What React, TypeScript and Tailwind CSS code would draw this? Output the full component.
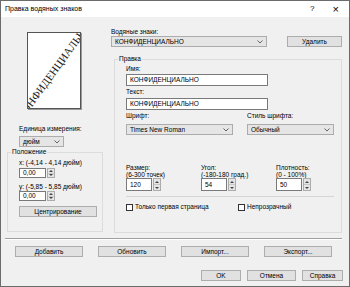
import React from 'react';

const ui = "font-['Liberation_Sans',Arial,sans-serif] text-[6.5px] text-black";

const Chevron: React.FC = () => (
  <svg width="6" height="4" viewBox="0 0 6 4" className="shrink-0">
    <path d="M0.5 0.5 L3 3 L5.5 0.5" fill="none" stroke="#444" strokeWidth="0.8" />
  </svg>
);

const Combo: React.FC<{ value: string; className?: string }> = ({ value, className = '' }) => (
  <div
    className={`flex items-center justify-between h-[11px] pl-[3px] pr-[3px] bg-[#e5e5e5] border border-[#acacac] leading-[9px] ${className}`}
  >
    <span>{value}</span>
    <Chevron />
  </div>
);

const Button: React.FC<{ label: string; className?: string }> = ({ label, className = '' }) => (
  <div
    className={`flex items-center justify-center h-[11px] bg-[#e1e1e1] border border-[#adadad] leading-[9px] ${className}`}
  >
    {label}
  </div>
);

const Spin: React.FC<{ value: string; inputW: string; h: string }> = ({ value, inputW, h }) => (
  <div className={`flex ${h}`}>
    <div className={`flex items-center pl-[3px] bg-white border border-[#7a7a7a] ${inputW}`}>{value}</div>
    <div className="flex flex-col w-[8px] ml-[1px] border border-[#acacac] bg-[#e5e5e5]">
      <div className="flex-1 flex items-center justify-center border-b border-[#c8c8c8]">
        <svg width="4" height="2" viewBox="0 0 4 2">
          <path d="M0 2 L2 0 L4 2 Z" fill="#444" />
        </svg>
      </div>
      <div className="flex-1 flex items-center justify-center">
        <svg width="4" height="2" viewBox="0 0 4 2">
          <path d="M0 0 L2 2 L4 0 Z" fill="#444" />
        </svg>
      </div>
    </div>
  </div>
);

const Check: React.FC<{ label: string }> = ({ label }) => (
  <div className="flex items-center gap-[2px]">
    <div className="w-[7px] h-[7px] bg-white border border-[#333]" />
    <span className="leading-[8px]">{label}</span>
  </div>
);

const GroupBox: React.FC<{ title: string; className?: string; children: React.ReactNode }> = ({
  title,
  className = '',
  children,
}) => (
  <div className={`relative border border-[#dcdcdc] ${className}`}>
    <span className="absolute -top-[5px] left-[3px] px-[1px] bg-[#f0f0f0] leading-[8px]">{title}</span>
    {children}
  </div>
);

export default function App() {
  return (
    <div className={`w-[350px] h-[287px] flex flex-col border border-[#6b6b6b] bg-[#f0f0f0] ${ui}`}>
      {/* заголовок */}
      <div className="h-[16px] bg-white flex items-center pl-[4px] pr-[10px]">
        <span className="text-[7px]">Правка водяных знаков</span>
        <span className="ml-auto text-[8px]">?</span>
        <span className="ml-[18px] text-[11px] leading-[11px] font-light">×</span>
      </div>

      <div className="flex pl-[6px]">
        {/* левая колонка */}
        <div className="w-[96px] flex flex-col">
          <div className="relative ml-[20px] mt-[15px] w-[54px] h-[77px] bg-white border border-[#555] shadow-[1px_1px_0_#999] overflow-hidden">
            <div className="absolute left-1/2 top-1/2 -translate-x-1/2 -translate-y-1/2 -rotate-[54deg] whitespace-nowrap font-['Liberation_Serif',serif] text-[11px] leading-[11px] text-[#222]">
              КОНФИДЕНЦИАЛЬНО
            </div>
          </div>
          <div className="ml-[12px] mt-[15px] leading-[9px]">Единица измерения:</div>
          <Combo value="дюйм" className="ml-[12px] mt-[3px] w-[45px]" />
          <GroupBox title="Положение" className="mt-[5px] h-[80px]">
            <div className="flex flex-col pl-[11px] pt-[6px]">
              <div className="leading-[8px]">x: (-4,14 - 4,14 дюйм)</div>
              <div className="mt-[1px]">
                <Spin value="0,00" inputW="w-[27px]" h="h-[10px]" />
              </div>
              <div className="mt-[5px] leading-[8px]">y: (-5,85 - 5,85 дюйм)</div>
              <div className="mt-0">
                <Spin value="0,00" inputW="w-[27px]" h="h-[10px]" />
              </div>
              <Button label="Центрирование" className="mt-[5px] w-[78px] h-[10px]" />
            </div>
          </GroupBox>
        </div>

        {/* правая колонка */}
        <div className="ml-[8px] w-[231px] flex flex-col">
          <div className="mt-[11px] leading-[8px]">Водяные знаки:</div>
          <div className="flex">
            <Combo value="КОНФИДЕНЦИАЛЬНО" className="w-[156px]" />
            <Button label="Удалить" className="ml-auto w-[55px]" />
          </div>
          <GroupBox title="Правка" className="ml-[3px] mt-[12px] w-[228px] h-[174px]">
            <div className="flex flex-col pl-[11px] pt-[5px]">
              <div className="leading-[8px]">Имя:</div>
              <div className="mt-[1px] w-[142px] h-[12px] flex items-center pl-[3px] bg-white border border-[#7a7a7a]">
                КОНФИДЕНЦИАЛЬНО
              </div>
              <div className="mt-[2px] leading-[8px]">Текст:</div>
              <div className="mt-[2px] w-[142px] h-[12px] flex items-center pl-[3px] bg-white border border-[#7a7a7a]">
                КОНФИДЕНЦИАЛЬНО
              </div>
              <div className="flex mt-[2px]">
                <div className="w-[121px] flex flex-col">
                  <div className="leading-[8px]">Шрифт:</div>
                  <Combo value="Times New Roman" className="mt-[4px] w-[107px]" />
                </div>
                <div className="flex flex-col">
                  <div className="leading-[8px]">Стиль шрифта:</div>
                  <Combo value="Обычный" className="mt-[4px] w-[87px]" />
                </div>
              </div>
              <div className="flex mt-[29px]">
                <div className="w-[75px] flex flex-col">
                  <div className="leading-[7px]">Размер:</div>
                  <div className="leading-[7px]">(6-300 точек)</div>
                  <Spin value="120" inputW="w-[26px]" h="h-[13px]" />
                </div>
                <div className="w-[75px] flex flex-col">
                  <div className="leading-[7px]">Угол:</div>
                  <div className="leading-[7px]">(-180-180 град.)</div>
                  <Spin value="54" inputW="w-[26px]" h="h-[13px]" />
                </div>
                <div className="flex flex-col">
                  <div className="leading-[7px]">Плотность:</div>
                  <div className="leading-[7px]">(0 - 100%)</div>
                  <Spin value="50" inputW="w-[26px]" h="h-[13px]" />
                </div>
              </div>
              <div className="mt-[5px] w-[208px] h-[1px] bg-[#d5d5d5]" />
              <div className="flex mt-[6px]">
                <div className="w-[112px]">
                  <Check label="Только первая страница" />
                </div>
                <Check label="Непрозрачный" />
              </div>
            </div>
          </GroupBox>
        </div>
      </div>

      <div className="ml-[4px] mt-[5px] w-[337px] border-t border-[#a0a0a0] border-b border-b-white" />

      <div className="flex gap-[15px] pl-[14px] mt-[6px]">
        <Button label="Добавить" className="w-[68px] h-[10px]" />
        <Button label="Обновить" className="w-[68px] h-[10px]" />
        <Button label="Импорт..." className="w-[68px] h-[10px]" />
        <Button label="Экспорт..." className="w-[68px] h-[10px]" />
      </div>

      <div className="flex justify-end gap-[6px] pr-[6px] mt-[13px]">
        <Button label="OK" className="w-[40px] border-[#0078d7]" />
        <Button label="Отмена" className="w-[49px]" />
        <Button label="Справка" className="w-[41px]" />
      </div>
    </div>
  );
}
